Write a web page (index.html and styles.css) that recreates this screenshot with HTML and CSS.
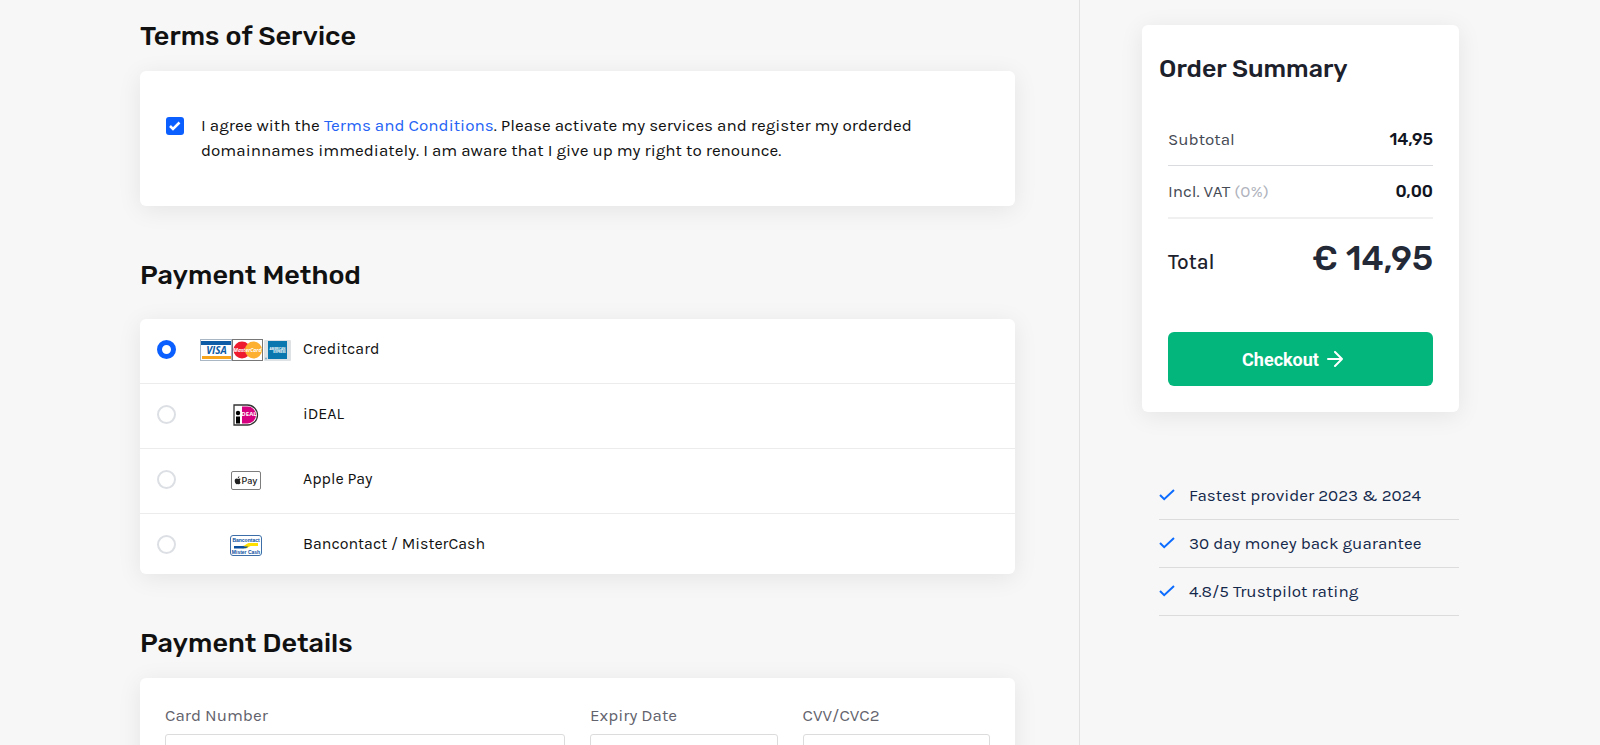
FILE: index.html
```html
<!DOCTYPE html>
<html lang="en">
<head>
    <meta charset="UTF-8">
    <meta name="viewport" content="width=device-width, initial-scale=1.0">
    <title>Checkout</title>
    <link rel="stylesheet" href="styles.css">
</head>
<body>
    <form class="page">
        <main class="main">
            <section class="section">
                <h2>Terms of Service</h2>
                <div class="card terms">
                    <input type="checkbox" id="agree" class="checkbox" checked>
                    <label for="agree">I agree with the <a href="#terms">Terms and Conditions</a>. Please activate my services and register my orderded domainnames immediately. I am aware that I give up my right to renounce.</label>
                </div>
            </section>

            <section class="section">
                <h2 class="heading-wide">Payment Method</h2>
                <div class="card methods">
                    <label class="method">
                        <input type="radio" name="method" class="radio" checked>
                        <span class="logo">
                            <svg width="91" height="22" viewBox="0 0 91 22">
                                <!-- visa -->
                                <rect x="0.5" y="0.5" width="31" height="21" fill="#fff" stroke="#a9b6c4"/>
                                <rect x="1" y="2" width="30" height="4" fill="#0e5ca5"/>
                                <rect x="2" y="17" width="29" height="3" fill="#f9a51c"/>
                                <text x="16.500" y="15" class="visa-text">VISA</text>
                                <!-- mastercard -->
                                <rect x="32.5" y="0.5" width="30" height="21" fill="#fff" stroke="#777"/>
                                <circle cx="42" cy="11" r="8.5" fill="#ee1b2e"/>
                                <circle cx="53.5" cy="11" r="8.5" fill="#fdb02f"/>
                                <text x="47.5" y="13" class="master-text">MasterCard</text>
                                <!-- american express -->
                                <rect x="64" y="1" width="27" height="21" rx="1" fill="#dfe2e5"/>
                                <rect x="68" y="2" width="19" height="18" fill="#0a78ae"/>
                                <text x="77.5" y="10.5" class="amex-text">AMERICAN</text>
                                <text x="79.500" y="14" class="amex-text">EXPRESS</text>
                                <circle cx="66" cy="19.5" r="1" fill="#7fa9c2"/>
                            </svg>
                        </span>
                        <span>Creditcard</span>
                    </label>
                    <label class="method">
                        <input type="radio" name="method" class="radio">
                        <span class="logo">
                            <svg width="26" height="22" viewBox="0 0 26 22">
                                <path d="M1 1h13.500a10 10 0 0 1 10 10a10 10 0 0 1-10 10H1z" fill="#fff" stroke="#333" stroke-width="1.300"/>
                                <path d="M9 2.500h5.500a8.500 8.500 0 0 1 0 17H9z" fill="#d5007f"/>
                                <circle cx="5" cy="9" r="2.200" fill="#000"/>
                                <rect x="3" y="12.500" width="4" height="7" fill="#000"/>
                                <text x="16" y="11.500" class="ideal-text">DEAL</text>
                            </svg>
                        </span>
                        <span>iDEAL</span>
                    </label>
                    <label class="method">
                        <input type="radio" name="method" class="radio">
                        <span class="logo">
                            <svg width="30" height="22" viewBox="0 -2 30 22">
                                <rect x="0.5" y="0.5" width="29" height="18" rx="1.500" fill="#fff" stroke="#7d7d7d"/>
                                <path d="M9.600 11.500c-.4 1-1 1.700-1.600 1.700-.5 0-.6-.3-1.200-.3s-.8.300-1.200.3c-.9 0-1.900-1.700-1.900-3.400 0-1.600 1-2.400 1.900-2.400.6 0 1 .4 1.400.4.400 0 .8-.4 1.500-.4.500 0 .9.200 1.200.7-1.200.8-1 2.700-.1 3.400zM6.800 7c0-.9.700-1.700 1.600-1.800.1.900-.7 1.800-1.600 1.800z" fill="#222"/>
                                <text x="18.500" y="12.700" class="apple-text">Pay</text>
                            </svg>
                        </span>
                        <span>Apple Pay</span>
                    </label>
                    <label class="method">
                        <input type="radio" name="method" class="radio">
                        <span class="logo">
                            <svg width="32" height="22" viewBox="0 -1 32 22">
                                <rect x="0.5" y="0.5" width="31" height="20" rx="2.500" fill="#fff" stroke="#3e6ea8"/>
                                <text x="16" y="6.500" class="bancontact-text">Bancontact</text>
                                <path d="M4 11h7c2 0 3 0 4.500-1.200C17 8.500 18 8 20 8h8v3h-6c-2 0-3 .5-4 1.500l-.8.700H12z" fill="#ffdf00"/>
                                <path d="M4 11h8.500c1.500 0 2 .6 3 .6h3.500c-1 0-1.500.6-2 1-1 .6-2 .9-3.500.9H4z" fill="#0a4f9e"/>
                                <text x="16" y="18.500" class="bancontact-text">Mister Cash</text>
                            </svg>
                        </span>
                        <span>Bancontact / MisterCash</span>
                    </label>
                </div>
            </section>

            <section class="section">
                <h2>Payment Details</h2>
                <div class="card details">
                    <div class="form-group form-group-wide">
                        <label for="cardNumber">Card Number</label>
                        <input type="text" id="cardNumber" name="cardNumber">
                    </div>
                    <div class="form-group">
                        <label for="expiry">Expiry Date</label>
                        <input type="text" id="expiry" name="expiry">
                    </div>
                    <div class="form-group">
                        <label for="cvv">CVV/CVC2</label>
                        <input type="text" id="cvv" name="cvv">
                    </div>
                </div>
            </section>
        </main>

        <aside class="sidebar">
            <div class="card summary">
                <h2>Order Summary</h2>
                <dl class="totals">
                    <div class="totals-row">
                        <dt>Subtotal</dt>
                        <dd>14,95</dd>
                    </div>
                    <div class="totals-row totals-vat">
                        <dt>Incl. VAT <span class="muted">(0%)</span></dt>
                        <dd>0,00</dd>
                    </div>
                    <div class="totals-row totals-due">
                        <dt>Total</dt>
                        <dd>€ 14,95</dd>
                    </div>
                </dl>
                <button type="submit" class="btn">
                    Checkout
                    <svg width="16" height="16" viewBox="0 0 16 16" fill="none" stroke="#fff" stroke-width="2" stroke-linecap="round" stroke-linejoin="round">
                        <path d="M1 8h14M8 1l7 7-7 7"/>
                    </svg>
                </button>
            </div>

            <ul class="benefits">
                <li>
                    <svg width="16" height="12" viewBox="0 0 16 12"><path d="M1 6l4.200 4.200L15 1"/></svg>
                    Fastest provider 2023 &amp; 2024
                </li>
                <li>
                    <svg width="16" height="12" viewBox="0 0 16 12"><path d="M1 6l4.200 4.200L15 1"/></svg>
                    30 day money back guarantee
                </li>
                <li>
                    <svg width="16" height="12" viewBox="0 0 16 12"><path d="M1 6l4.200 4.200L15 1"/></svg>
                    4.8/5 Trustpilot rating
                </li>
            </ul>
        </aside>
    </form>
</body>
</html>
```
FILE: styles.css
```css
* {
    box-sizing: border-box;
}
body {
    margin: 0;
    background-color: #f7f7f7;
    color: #111;
    font-family: Karla, Inter, sans-serif;
    font-size: 17px;
    line-height: 24px;
}
h2 {
    margin: 0 0 17px;
    font-family: Rubik, Roboto, sans-serif;
    font-size: 27px;
    font-weight: 500;
    line-height: 36px;
}
dl, dd, ul {
    margin: 0;
    padding: 0;
}
a {
    color: #2563f5;
    text-decoration: none;
}
.page {
    display: flex;
    min-height: 100vh;
}
.main {
    flex: 1;
    padding: 18px 64px 50px 140px;
    border-right: 1px solid #e2e2e2;
}
.section {
    margin-bottom: 51px;
}
.heading-wide {
    margin-bottom: 26px;
}
.card {
    background-color: #fff;
    border-radius: 6px;
    box-shadow: 0 4px 24px rgba(0, 0, 0, 0.08);
}

/* Terms */
.terms {
    display: flex;
    gap: 17px;
    padding: 42px 90px 43px 26px;
    line-height: 25px;
}
.checkbox {
    appearance: none;
    flex: none;
    width: 18px;
    height: 18px;
    margin: 4px 0 0;
    border-radius: 3px;
    background: #0b5fff url("data:image/svg+xml,%3Csvg xmlns='http://www.w3.org/2000/svg' viewBox='0 0 18 18'%3E%3Cpath d='M4 9l3 3L13.500 5.500' fill='none' stroke='white' stroke-width='2.500'/%3E%3C/svg%3E");
}
.checkbox:not(:checked) {
    background: #fff;
    border: 2px solid #dcdfe4;
}

/* Payment methods */
.method {
    display: flex;
    align-items: center;
    padding: 18px 17px 22px;
    border-bottom: 1px solid #ececec;
    font-size: 16px;
    cursor: pointer;
}
.method:last-child {
    padding-bottom: 18px;
    border-bottom: none;
}
.radio {
    appearance: none;
    width: 19px;
    height: 19px;
    margin: 0;
    border: 2px solid #dcdfe4;
    border-radius: 50%;
    background-color: #fff;
}
.radio:checked {
    border: 5px solid #0b5fff;
}
.logo {
    display: flex;
    justify-content: center;
    width: 91px;
    height: 22px;
    margin: 2px 12px 0 24px;
}
.logo text {
    font-family: "Open Sans", sans-serif;
    font-weight: 700;
    text-anchor: middle;
}
.logo .visa-text {
    font-size: 10px;
    font-style: italic;
    fill: #0e5ca5;
}
.logo .master-text {
    font-size: 5px;
    font-style: italic;
    fill: #fff;
}
.logo .amex-text {
    font-size: 3px;
    fill: #fff;
}
.logo .ideal-text {
    font-size: 6px;
    fill: #fff;
}
.logo .apple-text {
    font-family: Inter, sans-serif;
    font-size: 9px;
    font-weight: 500;
    fill: #222;
}
.logo .bancontact-text {
    font-family: "Liberation Sans", sans-serif;
    font-size: 5px;
    fill: #0a4f9e;
}

/* Payment details */
.details {
    display: grid;
    grid-template-columns: repeat(4, 1fr);
    gap: 25px;
    padding: 25px;
}
.form-group-wide {
    grid-column: span 2;
}
.form-group label {
    display: block;
    margin-bottom: 7px;
    color: #63636d;
}
.form-group input {
    display: block;
    width: 100%;
    height: 48px;
    padding: 10px;
    border: 1px solid #dcdcdc;
    border-radius: 3px;
    font: inherit;
}

/* Order summary */
.sidebar {
    width: 520px;
    padding: 25px 141px 0 62px;
}
.summary {
    padding: 26px;
    color: #1c212c;
}
.summary h2 {
    margin: 0 -9px 27px;
    font-size: 25px;
}
.totals-row {
    display: flex;
    justify-content: space-between;
    padding: 13px 0 14px;
    border-bottom: 1px solid #d9dbde;
}
.totals-row dt {
    color: #454a54;
}
.totals-row dd {
    color: #111522;
    font-family: Rubik, Roboto, sans-serif;
    font-weight: 500;
}
.totals-row .muted {
    color: #b0b3bd;
}
.totals-vat {
    border-bottom: 2px solid #f0f0f0;
}
.totals-due {
    padding: 18px 0 45px;
    border-bottom: none;
    line-height: 44px;
}
.totals-due dt {
    color: #1c212c;
    font-size: 21px;
    font-weight: 500;
    line-height: 50px;
}
.totals-due dd {
    color: #232936;
    font-size: 34px;
}
.btn {
    display: flex;
    justify-content: center;
    align-items: center;
    gap: 8px;
    width: 100%;
    height: 54px;
    padding: 0 16px 0 0;
    border: none;
    border-radius: 6px;
    background-color: #03b67b;
    color: #fff;
    font-family: Roboto, sans-serif;
    font-size: 18px;
    font-weight: 700;
    cursor: pointer;
}

/* Benefits */
.benefits {
    margin: 60px 0 0 17px;
    list-style: none;
}
.benefits li {
    display: flex;
    align-items: center;
    gap: 14px;
    padding: 11px 0 12px;
    border-bottom: 1px solid #dcdcdc;
    color: #14284b;
}
.benefits svg {
    fill: none;
    stroke: #0b6cff;
    stroke-width: 2;
}
```
